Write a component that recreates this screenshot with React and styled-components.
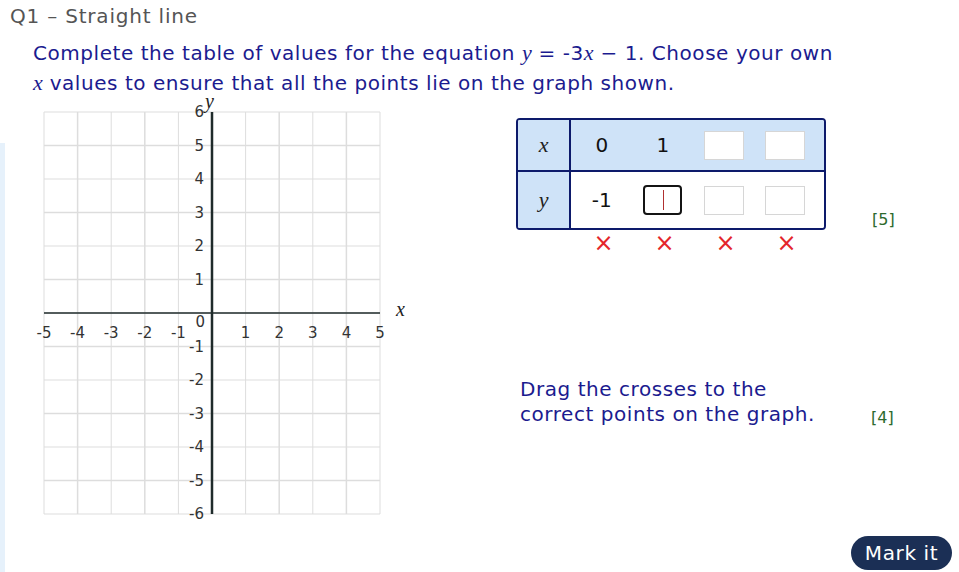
import React from "react";
import styled, { createGlobalStyle } from "styled-components";

const GlobalStyle = createGlobalStyle`
  html, body {
    margin: 0;
    padding: 0;
    background: #ffffff;
  }
  body {
    font-family: "DejaVu Sans", Verdana, sans-serif;
  }
`;

const Page = styled.div`
  height: 572px;
  display: flex;
  flex-direction: column;
  overflow: hidden;
`;

const Title = styled.h1`
  margin: 0;
  padding: 4px 0 0 10px;
  font-size: 20px;
  letter-spacing: 0.8px;
  line-height: 24px;
  font-weight: normal;
  color: #555555;
`;

const Prompt = styled.p`
  margin: 10px 0 0;
  padding-left: 33px;
  font-size: 20px;
  letter-spacing: 0.55px;
  line-height: 30px;
  color: #1b1b8f;
`;

const MathVar = styled.i`
  font-family: "Liberation Serif", "Times New Roman", serif;
  font-size: 22px;
  letter-spacing: 0;
`;

const Main = styled.div`
  flex: 1;
  display: flex;
  min-height: 0;
`;

const SideStrip = styled.div`
  width: 5px;
  margin-top: 45px;
  background: #e6f1fb;
`;

const GraphSvg = styled.svg`
  display: block;
  margin-left: 25px;
  flex-shrink: 0;
  overflow: visible;
`;

const RightCol = styled.div`
  flex: 1;
  margin-left: 96px;
  display: flex;
  flex-direction: column;
`;

const TaskRow = styled.div`
  display: flex;
  align-items: flex-start;
  margin-top: ${(p) => p.$top}px;
`;

const TableBlock = styled.div`
  display: flex;
  flex-direction: column;
`;

const ValueTable = styled.table`
  border-collapse: separate;
  border-spacing: 0;
  border: 2px solid #0d1a6b;
  border-radius: 4px;
  overflow: hidden;
  width: 310px;
`;

const Row = styled.tr`
  background: ${(p) => (p.$shaded ? "#cfe3f8" : "#ffffff")};
  height: ${(p) => p.$h}px;

  & > td {
    border-bottom: ${(p) => (p.$divider ? "2px solid #0d1a6b" : "none")};
  }
`;

const HeadCell = styled.td`
  width: 51px;
  padding: 0;
  background: #cfe3f8;
  border-right: 2px solid #0d1a6b;
  text-align: center;
  vertical-align: middle;
  font-family: "Liberation Serif", "Times New Roman", serif;
  font-style: italic;
  font-size: 22px;
  color: #222222;
`;

const ValueCell = styled.td`
  width: 61px;
  padding: 0;
  text-align: center;
  vertical-align: middle;
  font-size: 20px;
  color: #111111;

  &:last-child {
    padding-right: 8px;
  }
`;

const InputBox = styled.span`
  position: relative;
  display: inline-block;
  vertical-align: middle;
  box-sizing: border-box;
  width: ${(p) => (p.$focused ? 39 : 40)}px;
  height: ${(p) => (p.$focused ? 30 : 29)}px;
  background: #ffffff;
  border: ${(p) => (p.$focused ? "2px solid #141414" : "1px solid #d6d6d6")};
  border-radius: ${(p) => (p.$focused ? 4 : 0)}px;

  &::after {
    content: "";
    display: ${(p) => (p.$focused ? "block" : "none")};
    position: absolute;
    left: 50%;
    top: 3px;
    bottom: 3px;
    width: 1px;
    background: #b03030;
  }
`;

const CrossRow = styled.div`
  display: flex;
  padding-left: 57px;
  margin-top: 1px;
`;

const Cross = styled.span`
  width: 61px;
  text-align: center;
  font-size: 24px;
  line-height: 24px;
  color: #e4262b;
`;

const MarkValue = styled.span`
  margin-left: ${(p) => p.$left}px;
  margin-top: ${(p) => p.$top}px;
  font-size: 16px;
  line-height: 22px;
  color: #2d6a2d;
`;

const DragText = styled.p`
  margin: 0;
  padding-left: 4px;
  width: 355px;
  box-sizing: border-box;
  font-size: 20px;
  letter-spacing: 0.55px;
  line-height: 25px;
  color: #1b1b8f;
`;

const Footer = styled.div`
  margin-top: auto;
  display: flex;
  justify-content: flex-end;
  padding: 0 7px 2px 0;
`;

const MarkButton = styled.button`
  height: 34px;
  width: 101px;
  border: none;
  border-radius: 17px;
  background: #1b2f55;
  color: #ffffff;
  font-family: "DejaVu Sans", Verdana, sans-serif;
  font-size: 20px;
  letter-spacing: 0.6px;
  padding: 0;
  cursor: pointer;
`;

// graph geometry (svg coords)
const X0 = 14;
const Y0 = 14;
const SX = 33.6;
const SY = 33.5;
const px = (v) => X0 + (v + 5) * SX;
const py = (v) => Y0 + (6 - v) * SY;
const xs = [-5, -4, -3, -2, -1, 0, 1, 2, 3, 4, 5];
const ys = [6, 5, 4, 3, 2, 1, 0, -1, -2, -3, -4, -5, -6];

const Graph = () => (
  <GraphSvg width="390" height="430" viewBox="0 0 390 430">
    {xs.map((v) => (
      <line key={"v" + v} x1={px(v)} x2={px(v)} y1={py(6)} y2={py(-6)} stroke="#dddddd" strokeWidth={v % 2 === 0 ? 1.5 : 1} />
    ))}
    {ys.map((v) => (
      <line key={"h" + v} x1={px(-5)} x2={px(5)} y1={py(v)} y2={py(v)} stroke="#dddddd" strokeWidth={v % 2 !== 0 ? 1.5 : 1} />
    ))}
    <line x1={px(-5)} x2={px(5)} y1={py(0)} y2={py(0)} stroke="#1f2b2b" strokeWidth="1.5" />
    <line x1={px(0)} x2={px(0)} y1={py(6)} y2={py(-6)} stroke="#1f2b2b" strokeWidth="2.5" />
    <g fontFamily="DejaVu Sans, Verdana, sans-serif" fontSize="15" fill="#333333">
      {xs.filter((v) => v !== 0).map((v) => (
        <text key={"xl" + v} x={px(v)} y={py(0) + 25} textAnchor="middle">{v}</text>
      ))}
      {ys.filter((v) => v !== 0).map((v) => (
        <text key={"yl" + v} x={px(0) - 8} y={py(v) + 5} textAnchor="end">{v}</text>
      ))}
      <text x={px(0) - 7} y={py(0) + 14} textAnchor="end">0</text>
    </g>
    <g fontFamily="Liberation Serif, Times New Roman, serif" fontStyle="italic" fontSize="20" fill="#222222">
      <text x="175" y="10">y</text>
      <text x="366" y="218">x</text>
    </g>
  </GraphSvg>
);

const App = () => (
  <Page>
    <GlobalStyle />
    <Title>Q1 – Straight line</Title>
    <Prompt>
      Complete the table of values for the equation <MathVar>y</MathVar> = -3<MathVar>x</MathVar> − 1. Choose your own
      <br />
      <MathVar>x</MathVar> values to ensure that all the points lie on the graph shown.
    </Prompt>
    <Main>
      <SideStrip />
      <Graph />
      <RightCol>
        <TaskRow $top={20}>
          <TableBlock>
            <ValueTable>
              <tbody>
                <Row $shaded $divider $h={52}>
                  <HeadCell>x</HeadCell>
                  <ValueCell>0</ValueCell>
                  <ValueCell>1</ValueCell>
                  <ValueCell><InputBox /></ValueCell>
                  <ValueCell><InputBox /></ValueCell>
                </Row>
                <Row $h={56}>
                  <HeadCell>y</HeadCell>
                  <ValueCell>-1</ValueCell>
                  <ValueCell><InputBox $focused /></ValueCell>
                  <ValueCell><InputBox /></ValueCell>
                  <ValueCell><InputBox /></ValueCell>
                </Row>
              </tbody>
            </ValueTable>
            <CrossRow>
              <Cross>×</Cross>
              <Cross>×</Cross>
              <Cross>×</Cross>
              <Cross>×</Cross>
            </CrossRow>
          </TableBlock>
          <MarkValue $left={46} $top={91}>[5]</MarkValue>
        </TaskRow>
        <TaskRow $top={122}>
          <DragText>
            Drag the crosses to the
            <br />
            correct points on the graph.
          </DragText>
          <MarkValue $left={0} $top={30}>[4]</MarkValue>
        </TaskRow>
        <Footer>
          <MarkButton>Mark it</MarkButton>
        </Footer>
      </RightCol>
    </Main>
  </Page>
);

export default App;
